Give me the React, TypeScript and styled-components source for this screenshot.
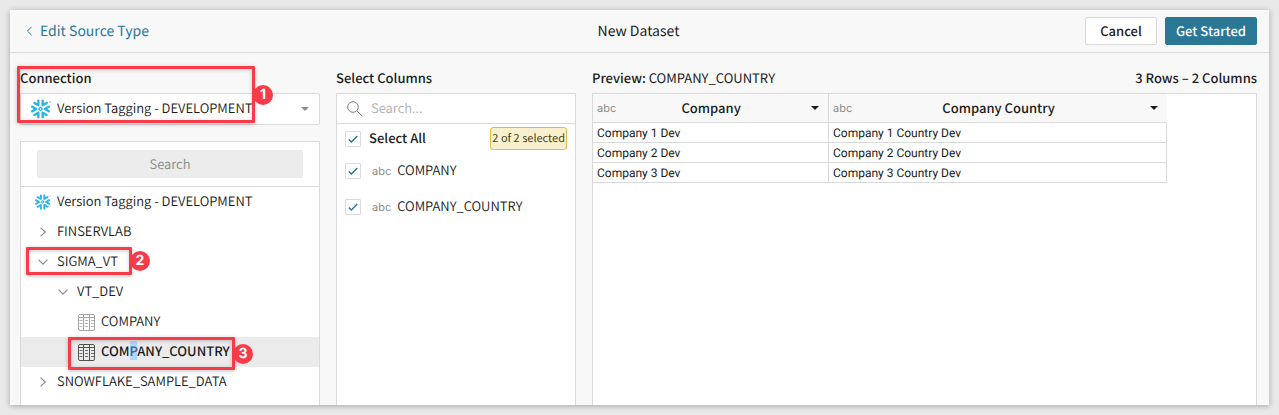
import React from "react";
import styled, { createGlobalStyle } from "styled-components";
import { SiSnowflake } from "react-icons/si";

const sans = `"Noto Sans CJK SC", "Source Sans Pro", sans-serif`;
const line = "#d9d9d9";
const ink = "#1b1b1b";
const accent = "#2a7796";
const marker = "#f83b48";

const GlobalStyle = createGlobalStyle`
  *, *::before, *::after { box-sizing: border-box; }
  body {
    margin: 0;
    background: #e9e9e9;
    color: ${ink};
    font: 350 13px/20px ${sans};
    text-rendering: geometricPrecision;
  }
  button, input, select { font: inherit; color: inherit; text-rendering: inherit; }
  ul { list-style: none; margin: 0; padding: 0; }
`;

const Page = styled.div`
  height: 100vh;
  padding: 10px;
`;

const Dialog = styled.main`
  height: 100%;
  display: flex;
  flex-direction: column;
  overflow: hidden;
  background: #f8f8f8;
  box-shadow: 0 1px 6px rgba(0, 0, 0, 0.3);
`;

const Header = styled.header`
  flex: none;
  display: grid;
  grid-template-columns: 1fr auto 1fr;
  align-items: center;
  height: 43px;
  padding: 0 12px 0 10px;
  border-bottom: 1px solid ${line};
`;

const BackLink = styled.a`
  display: flex;
  align-items: center;
  gap: 7px;
  padding-left: 6px;
  font-size: 14px;
  font-weight: 400;
  color: ${accent};
  text-decoration: none;
`;

const Title = styled.h1`
  margin: 0;
  font-size: 14px;
  font-weight: 400;
`;

const Actions = styled.div`
  display: flex;
  justify-content: flex-end;
  gap: 8px;
`;

const Button = styled.button<{ $primary?: boolean }>`
  width: ${(p) => (p.$primary ? 92 : 72)}px;
  height: 28px;
  padding: 0;
  border: 1px solid ${(p) => (p.$primary ? accent : line)};
  border-radius: 2px;
  background: ${(p) => (p.$primary ? accent : "#fff")};
  color: ${(p) => (p.$primary ? "#fff" : ink)};
  font-weight: 500;
  line-height: 20px;
`;

const Body = styled.div`
  flex: 1;
  min-height: 0;
  display: flex;
  gap: 16px;
  padding: 15px 12px 0 10px;
`;

const Column = styled.section<{ $width?: number }>`
  position: relative;
  display: flex;
  flex-direction: column;
  min-width: 0;
  flex: ${(p) => (p.$width ? `none` : 1)};
  width: ${(p) => (p.$width ? `${p.$width}px` : "auto")};
`;

const Caption = styled.div`
  display: flex;
  justify-content: space-between;
  height: 25px;
  font-weight: 500;
`;

const Light = styled.span`
  font-weight: 400;
`;

const Panel = styled.div`
  flex: 1;
  min-height: 0;
  border: 1px solid ${line};
  border-bottom: 0;
  background: #fff;
`;

const SelectWrap = styled.div`
  position: relative;
  margin-bottom: 16px;
  svg {
    position: absolute;
    pointer-events: none;
  }
  svg:first-child {
    left: 11px;
    top: 6px;
    color: #29b5e8;
  }
  svg:last-child {
    right: 11px;
    top: 14px;
    color: #8c8c8c;
  }
`;

const Select = styled.select`
  display: block;
  width: 100%;
  height: 32px;
  padding: 0 36px 2px;
  border: 1px solid ${line};
  border-radius: 2px;
  background: #fff;
  appearance: none;
`;

const TreeSearch = styled.div`
  padding: 8px 16px;
  border-bottom: 1px solid ${line};
  input {
    display: block;
    width: 100%;
    height: 28px;
    padding: 0 0 2px;
    border: 0;
    border-radius: 2px;
    background: #ececec;
    text-align: center;
  }
  input::placeholder { color: #8a8a8a; }
`;

const TreeItem = styled.li`
  position: relative;
`;

const TreeRow = styled.button<{ $indent: number; $selected?: boolean }>`
  display: flex;
  align-items: center;
  gap: 6px;
  width: 100%;
  height: 30px;
  padding: 0 0 0 ${(p) => p.$indent}px;
  border: 0;
  background: ${(p) => (p.$selected ? "#ebebeb" : "transparent")};
  font-weight: ${(p) => (p.$selected ? 500 : "inherit")};
  text-align: left;
  white-space: nowrap;
  svg { flex: none; }
`;

const Name = styled.span`
  padding-bottom: 2px;
`;

const Highlight = styled.mark`
  background: #b3d4fc;
  color: #4a5f7c;
`;

const Callout = styled.div<{ $x: number; $y: number; $w: number; $h: number }>`
  position: absolute;
  z-index: 1;
  left: ${(p) => p.$x}px;
  top: ${(p) => p.$y}px;
  width: ${(p) => p.$w}px;
  height: ${(p) => p.$h}px;
  border: 3px solid ${marker};
  border-radius: 1px;
  box-shadow: 0 1px 4px rgba(0, 0, 0, 0.25), inset 0 1px 4px rgba(0, 0, 0, 0.2);
  pointer-events: none;
`;

const CalloutNumber = styled.span`
  position: absolute;
  left: 100%;
  top: 50%;
  width: 20px;
  height: 20px;
  margin: -10px 0 0 1px;
  border-radius: 50%;
  background: ${marker};
  color: #fff;
  font: 700 14px/20px Inter, sans-serif;
  text-align: center;
`;

const FilterBar = styled.label`
  display: flex;
  align-items: center;
  gap: 8px;
  height: 30px;
  padding-left: 10px;
  border-bottom: 1px solid ${line};
  input {
    flex: 1;
    min-width: 0;
    padding: 0 0 2px;
    border: 0;
    outline: 0;
    background: none;
  }
  input::placeholder { color: #b0b0b0; }
`;

const CheckRow = styled.div<{ $head?: boolean }>`
  display: flex;
  align-items: center;
  justify-content: space-between;
  height: ${(p) => (p.$head ? 29 : 36)}px;
  padding: 0 8px;
  font-weight: ${(p) => (p.$head ? 500 : "inherit")};
  label {
    display: flex;
    align-items: center;
    gap: ${(p) => (p.$head ? 8 : 11)}px;
  }
`;

const Tick = styled.span`
  position: relative;
  display: flex;
  input {
    appearance: none;
    width: 16px;
    height: 16px;
    margin: 0;
    border: 1px solid ${line};
    border-radius: 1px;
    background: #fff;
  }
  svg {
    position: absolute;
    inset: 0;
    pointer-events: none;
    visibility: hidden;
  }
  input:checked + svg { visibility: visible; }
`;

const Badge = styled.span`
  padding: 0 1px;
  border: 1px solid #e2bb3c;
  border-radius: 3px;
  background: #f9f1cd;
  color: #4a4121;
  font-size: 11px;
  font-weight: 400;
  line-height: 21px;
`;

const TypeTag = styled.span`
  color: #8c8c8c;
  font: 400 11px/16px Inter, sans-serif;
`;

const Field = styled.span`
  display: flex;
  align-items: center;
  gap: 6px;
`;

const Table = styled.table`
  width: 574px;
  table-layout: fixed;
  border-collapse: separate;
  border-spacing: 0;
  th, td { border-bottom: 1px solid ${line}; }
  th:first-child, td { border-right: 1px solid ${line}; }
  th {
    height: 29px;
    padding: 0 4px;
    background: #f8f8f8;
    font-weight: 500;
  }
  th:first-child { width: 236px; }
  td {
    height: 20px;
    padding: 1px 4px 0;
    font: 400 12px/18px Roboto, sans-serif;
  }
`;

const HeadCell = styled.div`
  display: flex;
  align-items: center;
  justify-content: space-between;
`;

const Menu = styled.button`
  display: flex;
  width: 18px;
  height: 18px;
  align-items: center;
  justify-content: center;
  padding: 0;
  border: 0;
  background: none;
`;

const Caret = () => (
  <svg width="8" height="4" viewBox="0 0 8 4" fill="currentColor">
    <path d="M0 0h8L4 4z" />
  </svg>
);

const Chevron = ({ turn = 0, size = 16, color = "#8a8a8a" }) => (
  <svg width={size} height={size} viewBox="0 0 16 16" fill="none" stroke={color} strokeWidth="1.2">
    <path d="M5.6 3.6 10.2 8l-4.6 4.4" transform={`rotate(${turn} 8 8)`} />
  </svg>
);

const TableIcon = ({ color }: { color: string }) => (
  <svg width="17" height="17" viewBox="0 0 17 17" fill="none" stroke={color}>
    <rect x=".5" y=".5" width="16" height="16" rx="1.5" />
    <path d="M.5 3.5h16M5.5.5v16M11.5.5v16" />
    <path
      d="M1.5 6.5h3M7 6.5h3M13 6.5h3M1.5 9.5h3M7 9.5h3M13 9.5h3M1.5 12.5h3M7 12.5h3M13 12.5h3"
      strokeOpacity=".8"
    />
  </svg>
);

const Magnifier = () => (
  <svg width="16" height="16" viewBox="0 0 16 16" fill="none" stroke="#7d7d7d">
    <circle cx="6" cy="6" r="5.3" />
    <path d="m9.8 9.8 5.4 5.2" />
  </svg>
);

const Checkbox = ({ id }: { id: string }) => (
  <Tick>
    <input type="checkbox" id={id} defaultChecked />
    <svg width="16" height="16" viewBox="0 0 16 16" fill="none" stroke={accent} strokeWidth="1.4">
      <path d="m3.8 8.4 2.6 2.5 5.8-6" />
    </svg>
  </Tick>
);

const fields = ["COMPANY", "COMPANY_COUNTRY"];
const columns = ["Company", "Company Country"];
const rows = [1, 2, 3].map((n) => [`Company ${n} Dev`, `Company ${n} Country Dev`]);

export default function App() {
  return (
    <Page>
      <GlobalStyle />
      <Dialog>
        <Header>
          <BackLink href="#source-type">
            <svg width="7" height="10" viewBox="0 0 7 10" fill="none" stroke={accent}>
              <path d="M5.6.8 1.4 5l4.2 4.2" />
            </svg>
            Edit Source Type
          </BackLink>
          <Title>New Dataset</Title>
          <Actions>
            <Button>Cancel</Button>
            <Button $primary>Get Started</Button>
          </Actions>
        </Header>
        <Body>
          <Column $width={300}>
            <Caption as="label" htmlFor="connection">Connection</Caption>
            <SelectWrap>
              <SiSnowflake size={20} />
              <Select id="connection">
                <option>Version Tagging - DEVELOPMENT</option>
              </Select>
              <Caret />
            </SelectWrap>
            <Panel>
              <TreeSearch>
                <input type="text" placeholder="Search" aria-label="Search tables" />
              </TreeSearch>
              <ul>
                <TreeItem>
                  <TreeRow $indent={14}>
                    <SiSnowflake size={16} color="#29b5e8" />
                    <Name>Version Tagging - DEVELOPMENT</Name>
                  </TreeRow>
                </TreeItem>
                <TreeItem>
                  <TreeRow $indent={14}><Chevron /><Name>FINSERVLAB</Name></TreeRow>
                </TreeItem>
                <TreeItem>
                  <TreeRow $indent={14}><Chevron turn={90} /><Name>SIGMA_VT</Name></TreeRow>
                  <Callout $x={5} $y={0} $w={106} $h={28}>
                    <CalloutNumber>2</CalloutNumber>
                  </Callout>
                </TreeItem>
                <TreeItem>
                  <TreeRow $indent={34}><Chevron turn={90} /><Name>VT_DEV</Name></TreeRow>
                </TreeItem>
                <TreeItem>
                  <TreeRow $indent={57}>
                    <TableIcon color="#a3a3a3" />
                    <Name>COMPANY</Name>
                  </TreeRow>
                </TreeItem>
                <TreeItem>
                  <TreeRow $indent={57} $selected>
                    <TableIcon color="#505050" />
                    <Name>COM<Highlight>P</Highlight>ANY_COUNTRY</Name>
                  </TreeRow>
                  <Callout $x={47} $y={0} $w={167} $h={33}>
                    <CalloutNumber>3</CalloutNumber>
                  </Callout>
                </TreeItem>
                <TreeItem>
                  <TreeRow $indent={14}><Chevron /><Name>SNOWFLAKE_SAMPLE_DATA</Name></TreeRow>
                </TreeItem>
              </ul>
            </Panel>
            <Callout $x={-3} $y={-2} $w={238} $h={57}>
              <CalloutNumber>1</CalloutNumber>
            </Callout>
          </Column>

          <Column $width={240}>
            <Caption>Select Columns</Caption>
            <Panel>
              <FilterBar>
                <Magnifier />
                <input type="text" placeholder="Search..." aria-label="Search columns" />
              </FilterBar>
              <CheckRow $head>
                <label htmlFor="all"><Checkbox id="all" /><Name>Select All</Name></label>
                <Badge>2 of 2 selected</Badge>
              </CheckRow>
              {fields.map((name) => (
                <CheckRow key={name}>
                  <label htmlFor={name}>
                    <Checkbox id={name} />
                    <Field><TypeTag>abc</TypeTag><Name>{name}</Name></Field>
                  </label>
                </CheckRow>
              ))}
            </Panel>
          </Column>

          <Column>
            <Caption>
              <span>Preview: <Light>COMPANY_COUNTRY</Light></span>
              <span>3 Rows – 2 Columns</span>
            </Caption>
            <Panel>
              <Table>
                <thead>
                  <tr>
                    {columns.map((name) => (
                      <th key={name} scope="col">
                        <HeadCell>
                          <TypeTag>abc</TypeTag>
                          {name}
                          <Menu aria-label={`${name} menu`}><Caret /></Menu>
                        </HeadCell>
                      </th>
                    ))}
                  </tr>
                </thead>
                <tbody>
                  {rows.map((cells) => (
                    <tr key={cells[0]}>
                      {cells.map((cell) => <td key={cell}>{cell}</td>)}
                    </tr>
                  ))}
                </tbody>
              </Table>
            </Panel>
          </Column>
        </Body>
      </Dialog>
    </Page>
  );
}
